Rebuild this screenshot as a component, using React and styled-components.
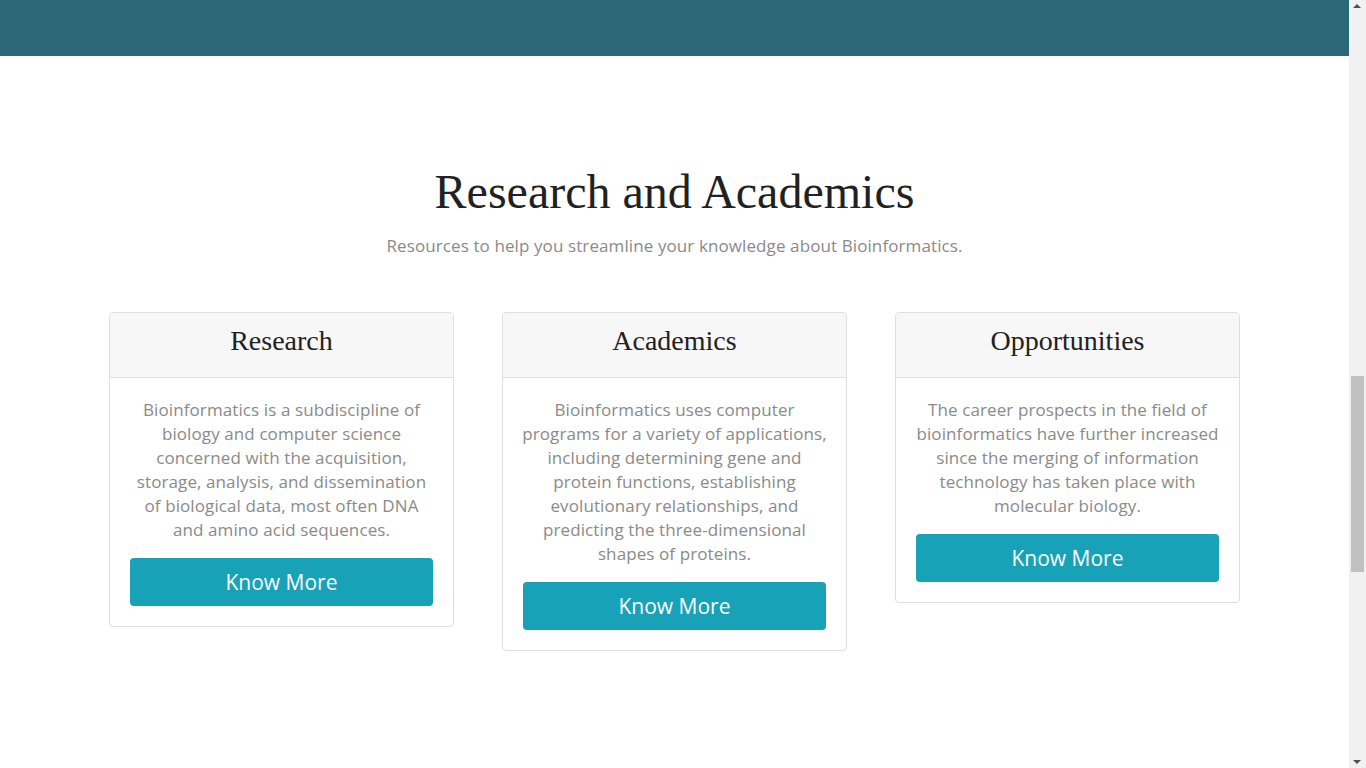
import React from "react";
import styled, { createGlobalStyle } from "styled-components";

const GlobalStyle = createGlobalStyle`
  body {
    margin: 0;
    background: #fff;
    font-family: "Open Sans", "Liberation Sans", sans-serif;
    overflow: hidden;
  }
  * {
    box-sizing: border-box;
  }
`;

const Viewport = styled.div`
  display: flex;
  height: 100vh;
`;

const Page = styled.main`
  flex: 1;
  min-width: 0;
`;

const TopBar = styled.header`
  height: 56px;
  background-color: #2c6777;
`;

const Section = styled.section`
  padding: 107px 0 120px;
  text-align: center;
`;

const Title = styled.h2`
  margin: 0;
  font-family: "Liberation Serif", "Times New Roman", serif;
  font-size: 48px;
  font-weight: 400;
  line-height: 1.2;
  color: #212121;
`;

const Subtitle = styled.p`
  margin: 13px 0 0;
  font-size: 17px;
  letter-spacing: 0.1px;
  line-height: 24px;
  color: #8a8a8a;
`;

const Cards = styled.div`
  display: grid;
  grid-template-columns: repeat(3, 345px);
  gap: 48px;
  justify-content: center;
  align-items: start;
  margin-top: 54px;
`;

const Card = styled.div`
  display: flex;
  flex-direction: column;
  border: 1px solid #dfdfdf;
  border-radius: 4px;
  overflow: hidden;
  background: #fff;

  .card__header {
    padding: 11px 20px 12px;
    background-color: #f7f7f7;
    border-bottom: 1px solid #dfdfdf;
  }

  .card__title {
    margin: 0 0 8px;
    font-family: "Liberation Serif", "Times New Roman", serif;
    font-size: 28px;
    font-weight: 400;
    line-height: 1.2;
    color: #212121;
  }

  .card__body {
    padding: 20px;
  }

  .card__text {
    margin: 0 -6px 16px;
    font-size: 17px;
    letter-spacing: 0.1px;
    line-height: 24px;
    color: #8a8a8a;
    white-space: nowrap;
  }
`;

const Button = styled.a`
  display: block;
  height: 48px;
  line-height: 48px;
  border-radius: 4px;
  background-color: #17a2b8;
  color: #fff;
  font-size: 21px;
  text-decoration: none;
  cursor: pointer;
`;

const Scrollbar = styled.div`
  position: relative;
  flex: 0 0 17px;
  background-color: #f1f1f1;

  .scrollbar__thumb {
    position: absolute;
    top: 376px;
    left: 2px;
    width: 13px;
    height: 196px;
    background-color: #c1c1c1;
  }
`;

const Arrow = styled.span`
  position: absolute;
  left: 4px;
  width: 0;
  height: 0;
  border-left: 4.5px solid transparent;
  border-right: 4.5px solid transparent;
  ${({ $down }) =>
    $down
      ? "bottom: 4px; border-top: 4px solid #505050;"
      : "top: 4px; border-bottom: 4px solid #505050;"}
`;

const items = [
  {
    title: "Research",
    lines: [
      "Bioinformatics is a subdiscipline of",
      "biology and computer science",
      "concerned with the acquisition,",
      "storage, analysis, and dissemination",
      "of biological data, most often DNA",
      "and amino acid sequences.",
    ],
  },
  {
    title: "Academics",
    lines: [
      "Bioinformatics uses computer",
      "programs for a variety of applications,",
      "including determining gene and",
      "protein functions, establishing",
      "evolutionary relationships, and",
      "predicting the three-dimensional",
      "shapes of proteins.",
    ],
  },
  {
    title: "Opportunities",
    lines: [
      "The career prospects in the field of",
      "bioinformatics have further increased",
      "since the merging of information",
      "technology has taken place with",
      "molecular biology.",
    ],
  },
];

const App = () => (
  <>
    <GlobalStyle />
    <Viewport>
      <Page>
        <TopBar />
        <Section>
          <Title>Research and Academics</Title>
          <Subtitle>
            Resources to help you streamline your knowledge about Bioinformatics.
          </Subtitle>
          <Cards>
            {items.map((item) => (
              <Card key={item.title}>
                <div className="card__header">
                  <h3 className="card__title">{item.title}</h3>
                </div>
                <div className="card__body">
                  <p className="card__text">
                    {item.lines.map((line, i) => (
                      <React.Fragment key={i}>
                        {i > 0 && <br />}
                        {line}
                      </React.Fragment>
                    ))}
                  </p>
                  <Button>Know More</Button>
                </div>
              </Card>
            ))}
          </Cards>
        </Section>
      </Page>
      <Scrollbar>
        <Arrow />
        <div className="scrollbar__thumb" />
        <Arrow $down />
      </Scrollbar>
    </Viewport>
  </>
);

export default App;
